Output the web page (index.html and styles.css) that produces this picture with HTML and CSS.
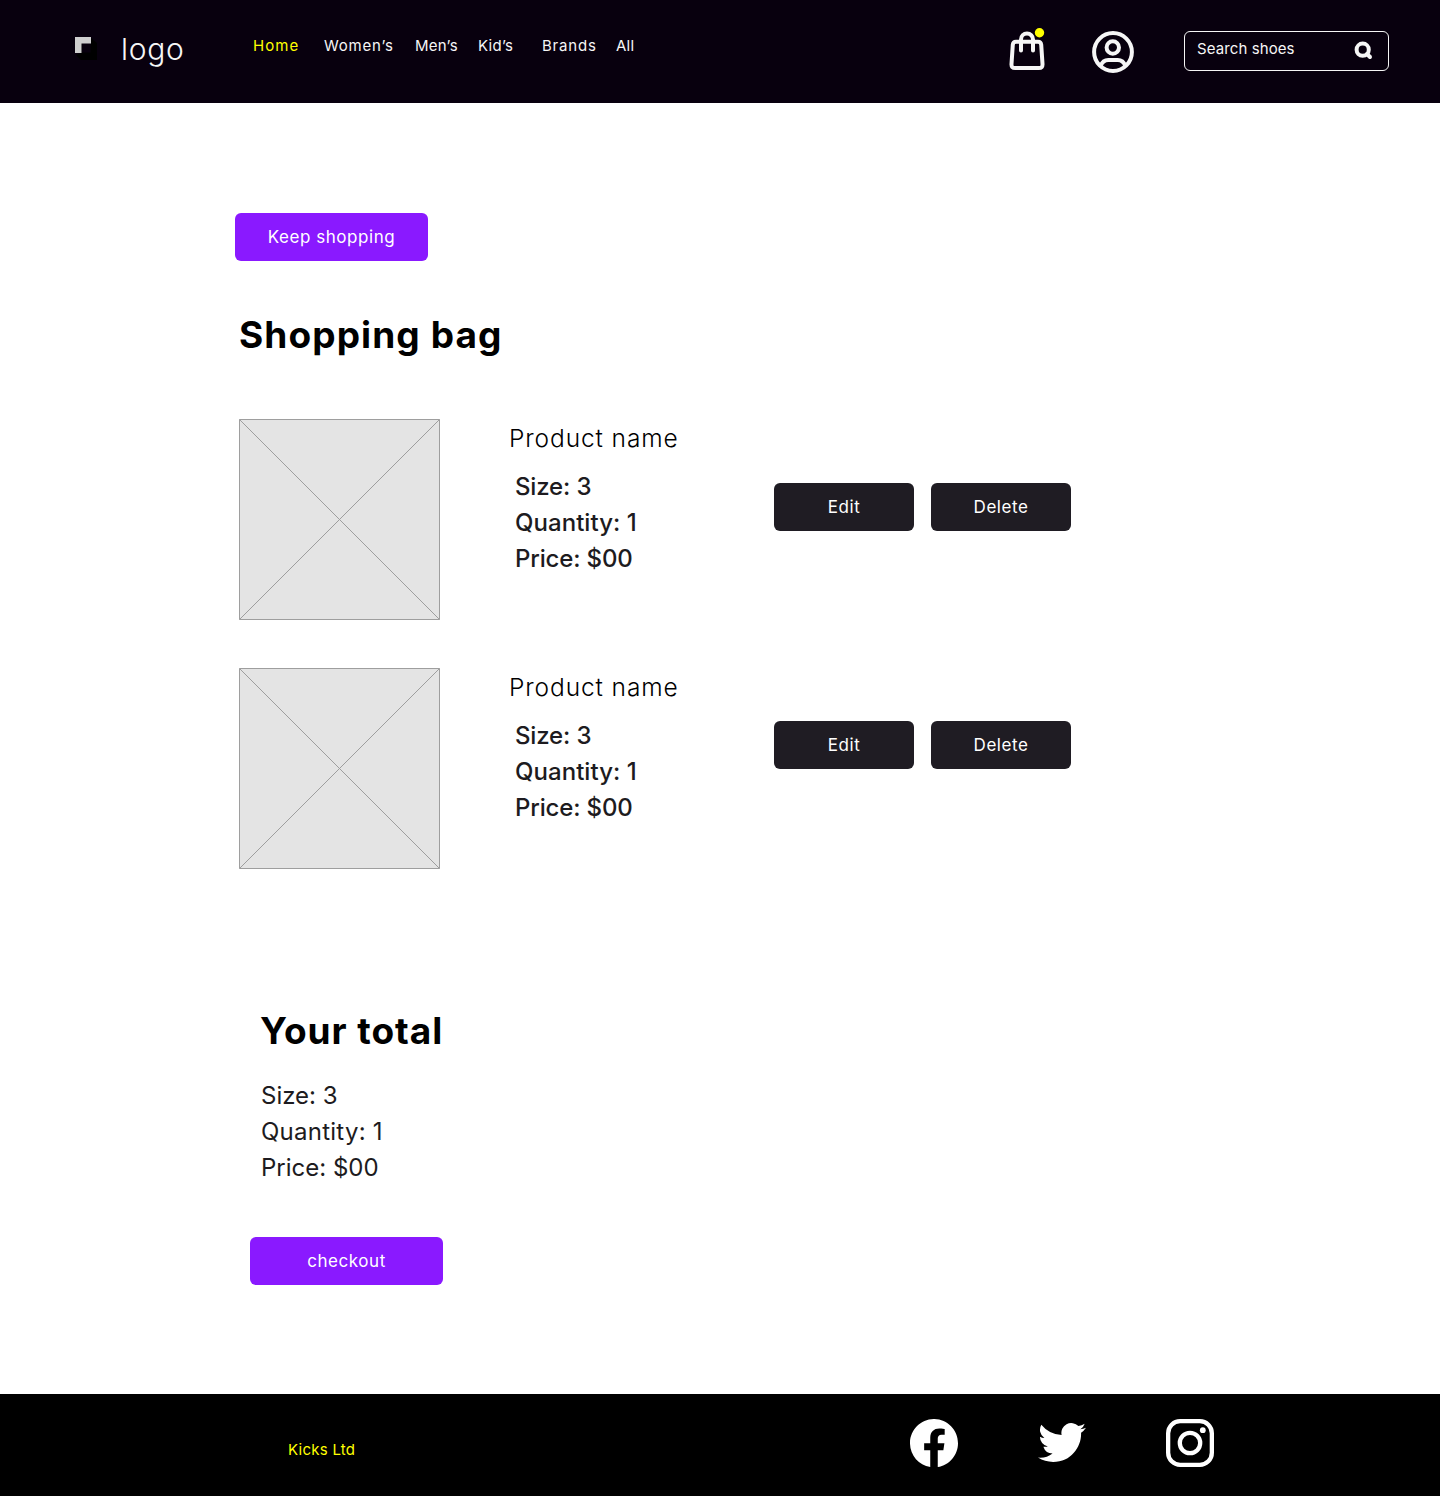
FILE: index.html
```html
<!DOCTYPE html>
<html lang="en">
<head>
<meta charset="utf-8">
<title>Shopping bag</title>
<link rel="stylesheet" href="styles.css">
</head>
<body>
<header class="header">
  <a class="brand">
    <svg class="brand-mark" width="24" height="24" viewBox="0 0 24 24"><path fill="#000" d="M16 1l6 5v17H6l-5-5 5-2V7h10z"/><path fill="#08000e" d="M7 7h8.500v8.500H7z"/><path fill="#cfcfcf" d="M0 0h16v6.500H6.500V16H0z"/></svg>
    <span class="brand-name">logo</span>
  </a>
  <nav class="nav">
    <a class="active">Home</a><a class="wide">Women’s</a><a>Men’s</a><a>Kid’s</a><a class="wide">Brands</a><a>All</a>
  </nav>
  <svg class="bag" width="38" height="46" viewBox="0 0 38 46"><g fill="none" stroke="#f6f6f6" stroke-width="4" stroke-linecap="round" stroke-linejoin="round"><path d="M8 13.700h22c2 0 3 1 3.200 3l1.300 19.300c.2 2.800-1 4-3.700 4H7.200c-2.700 0-3.900-1.200-3.700-4l1.300-19.300c.2-2 1.200-3 3.200-3z"/><path d="M13 22.500V11.500a6 6 0 0 1 12 0v11"/></g><circle cx="31.500" cy="4.700" r="4.700" fill="#ff0"/></svg>
  <svg class="account" width="42" height="42" viewBox="0 0 42 42" fill="none" stroke="#f6f6f6" stroke-width="4"><circle cx="21" cy="21" r="18.900"/><circle cx="20.800" cy="16.500" r="6.200"/><path d="M8.700 35c1.300-3.800 4-6 7.600-6h9.400c3.600 0 6.300 2.200 7.600 6"/></svg>
  <div class="search">
    <span>Search shoes</span>
    <svg width="19" height="19" viewBox="0 0 19 19" fill="none" stroke="#f6f6f6" stroke-width="4"><circle cx="8.700" cy="8.700" r="6.100"/><path d="M13 13l3 3" stroke-linecap="round"/></svg>
  </div>
</header>
<main class="main">
  <button class="button primary keep">Keep shopping</button>
  <h1 class="title">Shopping bag</h1>
  <section class="items">
    <article class="item">
      <svg class="thumb" width="201" height="201" viewBox="0 0 201 201"><path d="M.5.500h200v200H.5zl200 200m0-200l-200 200" fill="#e4e4e4" stroke="#9e9e9e"/></svg>
      <div class="info"><h2>Product name</h2><ul class="facts"><li>Size: 3</li><li class="quantity">Quantity: 1</li><li>Price: $00</li></ul></div>
      <div class="actions"><button class="button dark edit">Edit</button><button class="button dark delete">Delete</button></div>
    </article>
    <article class="item second">
      <svg class="thumb" width="201" height="201" viewBox="0 0 201 201"><path d="M.5.500h200v200H.5zl200 200m0-200l-200 200" fill="#e4e4e4" stroke="#9e9e9e"/></svg>
      <div class="info"><h2>Product name</h2><ul class="facts"><li>Size: 3</li><li class="quantity">Quantity: 1</li><li>Price: $00</li></ul></div>
      <div class="actions"><button class="button dark edit">Edit</button><button class="button dark delete">Delete</button></div>
    </article>
  </section>
  <section class="total">
    <h2 class="total-title">Your total</h2>
    <ul class="facts"><li>Size: 3</li><li class="quantity">Quantity: 1</li><li>Price: $00</li></ul>
    <button class="button primary checkout">checkout</button>
  </section>
</main>
<footer class="footer">
  <span class="company">Kicks Ltd</span>
  <div class="social">
    <svg width="48" height="48" viewBox="0 0 16 16" fill="#fff"><path d="M16 8.049c0-4.446-3.582-8.050-8-8.050C3.580 0-.002 3.603-.002 8.050c0 4.017 2.926 7.347 6.750 7.951v-5.625h-2.030V8.050H6.750V6.275c0-2.017 1.195-3.131 3.022-3.131.876 0 1.791.157 1.791.157v1.980h-1.009c-.993 0-1.303.621-1.303 1.258v1.510h2.218l-.354 2.326H9.250V16c3.824-.604 6.750-3.934 6.750-7.951"/></svg>
    <svg class="twitter" width="48" height="48" viewBox="0 0 16 16" fill="#fff"><path d="M5.026 15c6.038 0 9.341-5.003 9.341-9.334 0-.14 0-.282-.006-.422A6.685 6.685 0 0 0 16 3.542a6.658 6.658 0 0 1-1.889.518 3.301 3.301 0 0 0 1.447-1.817 6.533 6.533 0 0 1-2.087.793A3.286 3.286 0 0 0 7.875 6.030a9.325 9.325 0 0 1-6.767-3.429 3.289 3.289 0 0 0 1.018 4.382A3.323 3.323 0 0 1 .64 6.575v.045a3.288 3.288 0 0 0 2.632 3.218 3.203 3.203 0 0 1-.865.115 3.230 3.230 0 0 1-.614-.057 3.283 3.283 0 0 0 3.067 2.277A6.588 6.588 0 0 1 .78 13.580a6.320 6.320 0 0 1-.78-.045A9.344 9.344 0 0 0 5.026 15z"/></svg>
    <svg width="48" height="48" viewBox="0 0 48 48" fill="none" stroke="#fff" stroke-width="4.300"><rect x="2.150" y="2.150" width="43.700" height="43.700" rx="12"/><circle cx="24" cy="24" r="10.200"/><circle cx="36.800" cy="11.200" r="2.900" fill="#fff" stroke="none"/></svg>
  </div>
</footer>
</body>
</html>
```
FILE: styles.css
```css
* { box-sizing: border-box; margin: 0; padding: 0; }
body { font-family: Inter, "Liberation Sans", sans-serif; background: #fff; color: #000; }
svg { display: block; flex: none; }
ul { list-style: none; }
button { border: 0; font: inherit; }

.header { height: 103px; background: #08000e; color: #f6f6f6; display: flex; align-items: flex-start; padding-left: 75px; }
.brand { display: flex; width: 178px; padding-top: 30px; }
.brand-mark { margin: 7px 22px 0 0; }
.brand-name { font-size: 30px; line-height: 38px; font-weight: 300; letter-spacing: 0.7px; }
.nav { display: grid; grid-template-columns: 71px 91px 63px 64px 74px 40px; width: 755px; padding-top: 36px; font-size: 15px; line-height: 20px; letter-spacing: 0.25px; }
.nav .active { color: #ff0; letter-spacing: 1.1px; }
.nav .wide { letter-spacing: 0.8px; }
.bag { margin-top: 28px; }
.account { margin: 31px 0 0 46px; }
.search { margin: 31px 0 0 50px; width: 205px; height: 40px; border: 1px solid #f6f6f6; border-radius: 6px; display: flex; justify-content: space-between; padding: 6px 15px 0 12px; font-size: 15px; line-height: 21px; letter-spacing: 0.1px; }
.search svg { margin-top: 3px; }

.main { height: 1291px; padding: 110px 0 0 235px; }
.button { display: block; height: 48px; border-radius: 6px; color: #fff; font-size: 17px; line-height: 48px; text-align: center; letter-spacing: 0.55px; }
.primary { width: 193px; background: #8a19ff; }
.title { margin: 54px 0 0 4px; height: 40px; font-size: 37px; line-height: 40px; font-weight: 700; letter-spacing: 1.1px; }
.items { margin: 64px 0 0 4px; display: flex; flex-direction: column; gap: 48px; }
.item { display: flex; height: 201px; }
.info { width: 265px; margin-left: 69px; }
.info h2 { padding-top: 1px; font-size: 24.5px; line-height: 36px; font-weight: 300; letter-spacing: 0.9px; }
.info .facts { margin: 13px 0 0 6px; font-weight: 500; letter-spacing: -0.15px; }
.facts { font-size: 24px; line-height: 36px; color: #1d1b20; }
.info .quantity { letter-spacing: 0.05px; }
.total .quantity { letter-spacing: 0.25px; }
.actions { display: flex; gap: 17px; padding-top: 64px; }
.second .actions { padding-top: 53px; }
.dark { width: 140px; background: #1f1c23; }
.total { margin: 142px 0 0 15px; }
.total-title { margin-left: 10px; font-size: 37px; line-height: 40px; font-weight: 700; letter-spacing: 0.95px; }
.total .facts { margin: 27px 0 0 11px; }
.checkout { margin-top: 51px; }

.footer { height: 102px; background: #000; display: flex; align-items: flex-start; padding: 25px 0 0 288px; }
.company { width: 622px; padding-top: 21px; color: #ff0; font-size: 15px; line-height: 20px; letter-spacing: 0.25px; }
.social { display: flex; gap: 80px; }
.twitter { margin-top: -2px; }
```
